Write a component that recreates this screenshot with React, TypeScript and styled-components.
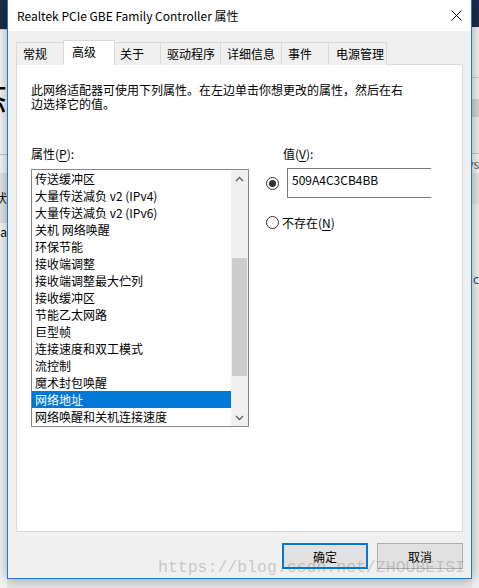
import styled, { createGlobalStyle } from "styled-components";

const GlobalStyle = createGlobalStyle`
  html, body {
    margin: 0;
    padding: 0;
  }
  body {
    width: 479px;
    height: 588px;
    overflow: hidden;
    background: #e6e6e6;
    font-family: "Noto Sans CJK SC", "Noto Sans", sans-serif;
    font-size: 12px;
    color: #000;
  }
`

const Screen = styled.div`
  position: relative;
  display: flex;
  width: 479px;
  height: 588px;
  overflow: hidden;
  background: #e6e6e6;
`

/* the windows behind the dialog */
const Backdrop = styled.div<{ $w: number }>`
  width: ${p => p.$w}px;
  flex-shrink: 0;
  height: 100%;
  display: flex;
  flex-direction: column;
  background: #f2f2f2;
`

const Band = styled.div<{ $h?: number; $bg: string; $size?: number; $color?: string }>`
  flex: ${p => (p.$h ? `0 0 ${p.$h}px` : "1")};
  background: ${p => p.$bg};
  display: flex;
  align-items: center;
  justify-content: flex-end;
  overflow: hidden;
  white-space: nowrap;
  font-size: ${p => p.$size ?? 12}px;
  line-height: 1;
  color: ${p => p.$color ?? "#000"};
`

const Dialog = styled.div`
  position: relative;
  z-index: 1;
  width: 465px;
  height: 579px;
  flex-shrink: 0;
  box-sizing: border-box;
  display: flex;
  flex-direction: column;
  background: #f0f0f0;
  border: 1px solid #1a7bd0;
  border-top: none;
  box-shadow: 0 0 12px rgba(0, 0, 0, 0.35);
`

const TitleBar = styled.div`
  height: 31px;
  flex-shrink: 0;
  display: flex;
  align-items: center;
  padding-left: 9px;
  background: #fff;
`

const Title = styled.div`
  flex: 1;
  font-size: 12px;
  line-height: 16px;
  padding-top: 1px;
`

const CloseBtn = styled.div`
  width: 30px;
  height: 31px;
  display: flex;
  align-items: center;
  justify-content: center;
`

const Body = styled.div`
  flex: 1;
  display: flex;
  flex-direction: column;
  padding: 9px 8px 0 8px;
`

const TabRow = styled.div`
  height: 25px;
  display: flex;
  align-items: flex-end;
`

const Tab = styled.div<{ $w: number; $pad: number; $active?: boolean }>`
  position: relative;
  z-index: ${p => (p.$active ? 2 : 0)};
  box-sizing: border-box;
  width: ${p => p.$w}px;
  height: ${p => (p.$active ? 25 : 23)}px;
  margin-left: -1px;
  padding-left: ${p => p.$pad}px;
  padding-top: ${p => (p.$active ? 2 : 2)}px;
  border: 1px solid #d9d9d9;
  border-bottom: none;
  background: ${p => (p.$active ? "#fff" : "#f0f0f0")};
  line-height: 18px;
  white-space: nowrap;
  &:first-child {
    margin-left: 0;
  }
`

const Panel = styled.div`
  box-sizing: border-box;
  height: 468px;
  margin-top: -1px;
  display: flex;
  flex-direction: column;
  padding: 18px 14px 0 14px;
  background: #fff;
  border: 1px solid #d9d9d9;
`

const Desc = styled.div`
  line-height: 14px;
  width: 380px;
`

const Columns = styled.div`
  margin-top: 36px;
  display: flex;
  gap: 17px;
`

const LeftCol = styled.div`
  width: 218px;
  display: flex;
  flex-direction: column;
`

const RightCol = styled.div`
  flex: 1;
  display: flex;
  flex-direction: column;
`

const Label = styled.div<{ $indent?: number }>`
  line-height: 14px;
  padding-left: ${p => p.$indent ?? 0}px;
  margin-bottom: 8px;
  u {
    text-decoration: underline;
    text-underline-offset: 2px;
  }
`

const ListBox = styled.div`
  box-sizing: border-box;
  height: 258px;
  display: flex;
  border: 1px solid #828790;
  background: #fff;
`

const Items = styled.div`
  flex: 1;
  display: flex;
  flex-direction: column;
  padding-top: 0;
`

const Item = styled.div<{ $sel?: boolean }>`
  height: 17px;
  line-height: 17px;
  padding-left: 3px;
  white-space: nowrap;
  background: ${p => (p.$sel ? "#0078d7" : "transparent")};
  color: ${p => (p.$sel ? "#fff" : "#000")};
`

const ScrollBar = styled.div`
  width: 17px;
  display: flex;
  flex-direction: column;
  background: #f0f0f0;
`

const ScrollArrow = styled.div`
  height: 17px;
  flex-shrink: 0;
  display: flex;
  align-items: center;
  justify-content: center;
`

const Track = styled.div`
  flex: 1;
  display: flex;
  flex-direction: column;
  align-items: center;
`

const Thumb = styled.div<{ $top: number; $h: number }>`
  width: 15px;
  margin-top: ${p => p.$top}px;
  height: ${p => p.$h}px;
  background: #cdcdcd;
`

const RadioRow = styled.div<{ $gap: number; $mt?: number }>`
  display: flex;
  align-items: center;
  gap: ${p => p.$gap}px;
  margin-top: ${p => p.$mt ?? 0}px;
  u {
    text-decoration: underline;
    text-underline-offset: 2px;
  }
`

const Radio = styled.div<{ $on?: boolean }>`
  box-sizing: border-box;
  width: 13px;
  height: 13px;
  border-radius: 50%;
  border: 1px solid #333;
  background: #fff;
  display: flex;
  align-items: center;
  justify-content: center;
  &::after {
    content: "";
    display: ${p => (p.$on ? "block" : "none")};
    width: 7px;
    height: 7px;
    border-radius: 50%;
    background: #333;
  }
`

const ValueBox = styled.div`
  box-sizing: border-box;
  width: 144px;
  height: 30px;
  padding: 3px 0 0 4px;
  border: 1px solid #7a7a7a;
  border-right: none;
  line-height: 16px;
`

const Footer = styled.div`
  display: flex;
  justify-content: flex-end;
  gap: 9px;
  padding-top: 11px;
`

const Button = styled.div<{ $primary?: boolean }>`
  box-sizing: border-box;
  width: 86px;
  height: 26px;
  display: flex;
  align-items: center;
  justify-content: center;
  background: #e1e1e1;
  border: ${p => (p.$primary ? "2px solid #0078d7" : "1px solid #adadad")};
`

const Watermark = styled.div`
  position: absolute;
  z-index: 3;
  left: 158px;
  top: 558px;
  font-family: "Liberation Mono", monospace;
  font-size: 16.5px;
  line-height: 20px;
  color: rgba(110, 110, 110, 0.32);
  white-space: nowrap;
  pointer-events: none;
`

const tabs = [
  { label: "常规", w: 48, pad: 6 },
  { label: "高级", w: 52, pad: 8, active: true },
  { label: "关于", w: 47, pad: 5 },
  { label: "驱动程序", w: 61, pad: 6 },
  { label: "详细信息", w: 62, pad: 6 },
  { label: "事件", w: 48, pad: 6 },
  { label: "电源管理", w: 59, pad: 7 },
]

const props = [
  "传送缓冲区",
  "大量传送减负 v2 (IPv4)",
  "大量传送减负 v2 (IPv6)",
  "关机 网络唤醒",
  "环保节能",
  "接收端调整",
  "接收端调整最大伫列",
  "接收缓冲区",
  "节能乙太网路",
  "巨型帧",
  "连接速度和双工模式",
  "流控制",
  "魔术封包唤醒",
  "网络地址",
  "网络唤醒和关机连接速度",
]

const Chevron = ({ up }: { up?: boolean }) => (
  <svg width="9" height="6" viewBox="0 0 9 6">
    <polyline
      points={up ? "1,5 4.5,1.5 8,5" : "1,1 4.5,4.5 8,1"}
      fill="none"
      stroke="#606060"
      strokeWidth="1.3"
    />
  </svg>
)

export default function App() {
  return (
    <>
      <GlobalStyle />
      <Screen>
        <Backdrop $w={7}>
          <Band $h={29} $bg="#1d2d4b" />
          <Band $h={1} $bg="#cfcfcf" />
          <Band $h={47} $bg="#f7f7f7" />
          <Band $h={40} $bg="#f7f7f7" $size={34}>态</Band>
          <Band $h={37} $bg="#f8f8f8" />
          <Band $h={1} $bg="#c9c9c9" />
          <Band $h={18} $bg="#f8f8f8" />
          <Band $h={50} $bg="#e6e6e6" $size={12}>状</Band>
          <Band $h={18} $bg="#f8f8f8" $size={12}>da</Band>
          <Band $bg="#f5f5f5" />
        </Backdrop>

        <Dialog>
          <TitleBar>
            <Title>Realtek PCIe GBE Family Controller 属性</Title>
            <CloseBtn>
              <svg width="11" height="11" viewBox="0 0 11 11">
                <path d="M0.5 0.5 L10.5 10.5 M10.5 0.5 L0.5 10.5" stroke="#000" strokeWidth="1" />
              </svg>
            </CloseBtn>
          </TitleBar>

          <Body>
            <TabRow>
              {tabs.map(t => (
                <Tab key={t.label} $w={t.w} $pad={t.pad} $active={t.active}>
                  {t.label}
                </Tab>
              ))}
            </TabRow>

            <Panel>
              <Desc>此网络适配器可使用下列属性。在左边单击你想更改的属性，然后在右边选择它的值。</Desc>

              <Columns>
                <LeftCol>
                  <Label>属性(<u>P</u>):</Label>
                  <ListBox>
                    <Items>
                      {props.map(p => (
                        <Item key={p} $sel={p === "网络地址"}>{p}</Item>
                      ))}
                    </Items>
                    <ScrollBar>
                      <ScrollArrow><Chevron up /></ScrollArrow>
                      <Track>
                        <Thumb $top={71} $h={118} />
                      </Track>
                      <ScrollArrow><Chevron /></ScrollArrow>
                    </ScrollBar>
                  </ListBox>
                </LeftCol>

                <RightCol>
                  <Label $indent={17} style={{ marginBottom: 7 }}>值(<u>V</u>):</Label>
                  <RadioRow $gap={8}>
                    <Radio $on />
                    <ValueBox>509A4C3CB4BB</ValueBox>
                  </RadioRow>
                  <RadioRow $gap={3} $mt={16}>
                    <Radio />
                    <span>不存在(<u>N</u>)</span>
                  </RadioRow>
                </RightCol>
              </Columns>
            </Panel>

            <Footer>
              <Button $primary>确定</Button>
              <Button>取消</Button>
            </Footer>
          </Body>
        </Dialog>

        <Backdrop $w={7}>
          <Band $h={27} $bg="#1d2d4b" />
          <Band $h={50} $bg="#f3f3f3" />
          <Band $h={1} $bg="#cfcfcf" />
          <Band $h={21} $bg="#f3f3f3" />
          <Band $h={18} $bg="#d6d6d6" />
          <Band $h={36} $bg="#f0f0f0" />
          <Band $h={1} $bg="#c8c8c8" />
          <Band $h={19} $bg="#f5f5f5" $color="#555">ys</Band>
          <Band $h={31} $bg="#e6e6e6" />
          <Band $h={66} $bg="#f3f3f3" />
          <Band $h={17} $bg="#f3f3f3" $color="#3b4a6b">ic</Band>
          <Band $bg="#f0f0f0" />
        </Backdrop>

        <Watermark>https://blog.csdn.net/ZHOUBEISI</Watermark>
      </Screen>
    </>
  )
}
